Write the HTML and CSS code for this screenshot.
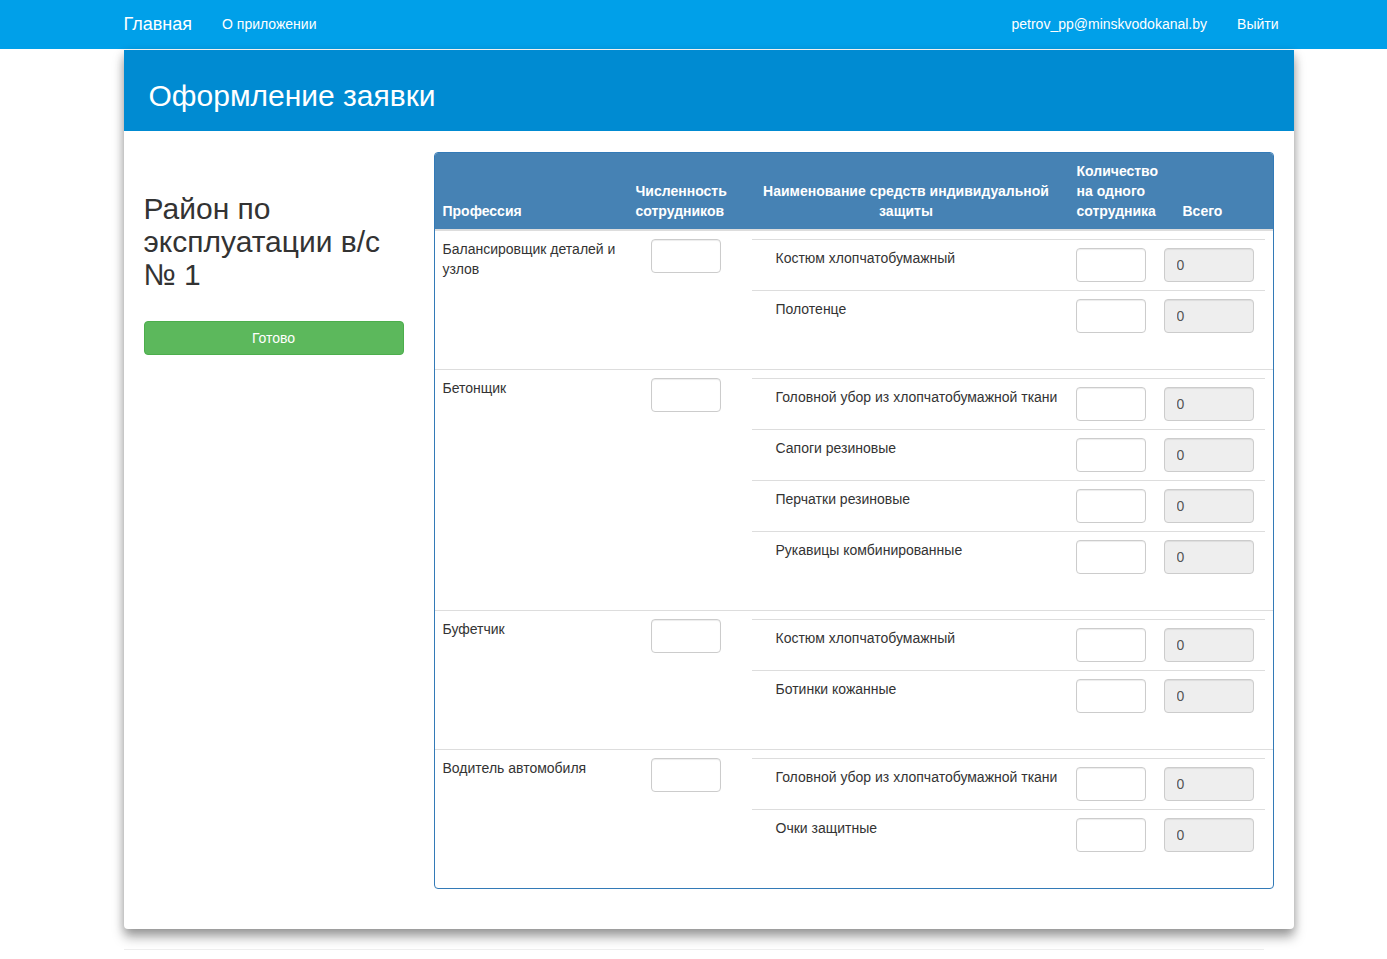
FILE: index.html
```html
<!DOCTYPE html>
<html lang="ru">
<head>
<meta charset="utf-8">
<title>Оформление заявки</title>
<link rel="stylesheet" href="styles.css">
</head>
<body>
<nav class="navbar">
  <div class="nav-inner">
    <a class="brand" href="#">Главная</a>
    <a class="nav-link" href="#">О приложении</a>
    <div class="nav-right">
      <a class="nav-link" href="#">petrov_pp@minskvodokanal.by</a>
      <a class="nav-link" href="#">Выйти</a>
    </div>
  </div>
</nav>

<div class="page">
  <div class="card">
    <div class="card-header">
      <h1 class="card-title">Оформление заявки</h1>
    </div>
    <div class="card-body">
      <div class="side">
        <h2 class="district">Район по эксплуатации в/с № 1</h2>
        <button class="btn-done" type="button">Готово</button>
      </div>
      <div class="panel">
        <table class="main-table">
          <colgroup>
            <col class="c-prof"><col class="c-count"><col class="c-name"><col class="c-qty"><col class="c-total">
          </colgroup>
          <thead>
            <tr>
              <th>Профессия</th>
              <th>Численность сотрудников</th>
              <th class="th-center">Наименование средств индивидуальной защиты</th>
              <th>Количество на одного сотрудника</th>
              <th>Всего</th>
            </tr>
          </thead>
          <tbody>
            <tr>
              <td>Балансировщик деталей и узлов</td>
              <td class="td-count"><input class="field" type="text"></td>
              <td colspan="3">
                <table class="inner-table">
                  <colgroup><col class="i-name"><col class="i-qty"><col class="i-total"></colgroup>
                  <tr><td class="i-label">Костюм хлопчатобумажный</td><td><input class="field" type="text"></td><td><input class="field total" type="text" value="0" readonly></td></tr>
                  <tr><td class="i-label">Полотенце</td><td><input class="field" type="text"></td><td><input class="field total" type="text" value="0" readonly></td></tr>
                </table>
              </td>
            </tr>
            <tr>
              <td>Бетонщик</td>
              <td class="td-count"><input class="field" type="text"></td>
              <td colspan="3">
                <table class="inner-table">
                  <colgroup><col class="i-name"><col class="i-qty"><col class="i-total"></colgroup>
                  <tr><td class="i-label">Головной убор из хлопчатобумажной ткани</td><td><input class="field" type="text"></td><td><input class="field total" type="text" value="0" readonly></td></tr>
                  <tr><td class="i-label">Сапоги резиновые</td><td><input class="field" type="text"></td><td><input class="field total" type="text" value="0" readonly></td></tr>
                  <tr><td class="i-label">Перчатки резиновые</td><td><input class="field" type="text"></td><td><input class="field total" type="text" value="0" readonly></td></tr>
                  <tr><td class="i-label">Рукавицы комбинированные</td><td><input class="field" type="text"></td><td><input class="field total" type="text" value="0" readonly></td></tr>
                </table>
              </td>
            </tr>
            <tr>
              <td>Буфетчик</td>
              <td class="td-count"><input class="field" type="text"></td>
              <td colspan="3">
                <table class="inner-table">
                  <colgroup><col class="i-name"><col class="i-qty"><col class="i-total"></colgroup>
                  <tr><td class="i-label">Костюм хлопчатобумажный</td><td><input class="field" type="text"></td><td><input class="field total" type="text" value="0" readonly></td></tr>
                  <tr><td class="i-label">Ботинки кожанные</td><td><input class="field" type="text"></td><td><input class="field total" type="text" value="0" readonly></td></tr>
                </table>
              </td>
            </tr>
            <tr>
              <td>Водитель автомобиля</td>
              <td class="td-count"><input class="field" type="text"></td>
              <td colspan="3">
                <table class="inner-table">
                  <colgroup><col class="i-name"><col class="i-qty"><col class="i-total"></colgroup>
                  <tr><td class="i-label">Головной убор из хлопчатобумажной ткани</td><td><input class="field" type="text"></td><td><input class="field total" type="text" value="0" readonly></td></tr>
                  <tr><td class="i-label">Очки защитные</td><td><input class="field" type="text"></td><td><input class="field total" type="text" value="0" readonly></td></tr>
                </table>
              </td>
            </tr>
          </tbody>
        </table>
      </div>
    </div>
  </div>
  <hr class="footer-line">
</div>
</body>
</html>
```

FILE: styles.css
```css
* { box-sizing: border-box; }

html, body {
  margin: 0;
  padding: 0;
  background: #fff;
}

body {
  font-family: "Liberation Sans", Arial, Helvetica, sans-serif;
  font-size: 14px;
  line-height: 20px;
  color: #333;
}

a { text-decoration: none; }

.navbar {
  background: #00a0e9;
  height: 50px;
  border-bottom: 1px solid #fff;
}

.nav-inner {
  width: 1200px;
  margin: 0 auto;
  padding-left: 30px;
  height: 47px;
  display: flex;
  align-items: center;
}

.brand {
  color: #fff;
  font-size: 18px;
  line-height: 20px;
  margin-right: 30px;
}

.nav-link {
  color: #fff;
  font-size: 14px;
  line-height: 20px;
}

.nav-right {
  margin-left: auto;
  display: flex;
  gap: 30px;
  padding-right: 15px;
}

.page {
  width: 1200px;
  margin: 0 auto;
  padding-left: 30px;
}

.card {
  width: 1170px;
  background: #fff;
  border-radius: 0 0 4px 4px;
  box-shadow: 0 8px 12px rgba(0, 0, 0, 0.35), 0 2px 10px rgba(0, 0, 0, 0.15);
}

.card-header {
  background: #008bd2;
  height: 81px;
  padding: 0 25px;
  display: flex;
  align-items: center;
}

.card-title {
  margin: 0;
  font-size: 30px;
  font-weight: normal;
  line-height: 33px;
  color: #fff;
  padding-top: 10px;
}

.card-body {
  display: flex;
  gap: 30px;
  padding: 21px 20px 40px 20px;
}

.side {
  width: 260px;
  flex: none;
}

.district {
  margin: 40px 0 30px 0;
  font-size: 30px;
  font-weight: normal;
  line-height: 33px;
  color: #333;
}

.btn-done {
  display: block;
  width: 260px;
  height: 34px;
  background: #5cb85c;
  border: 1px solid #4cae4c;
  border-radius: 4px;
  color: #fff;
  font-family: inherit;
  font-size: 14px;
  cursor: pointer;
}

.panel {
  flex: 1;
  border: 1px solid #337ab7;
  border-radius: 4px;
  overflow: hidden;
}

.main-table {
  width: 100%;
  border-collapse: collapse;
  table-layout: fixed;
}

.c-prof { width: 193px; }
.c-count { width: 116px; }
.c-name { width: 325px; }
.c-qty { width: 106px; }
.c-total { width: 98px; }

.main-table > thead > tr > th {
  background: #4682b4;
  color: #fff;
  font-weight: bold;
  text-align: left;
  vertical-align: bottom;
  padding: 8px;
  line-height: 20px;
  border-bottom: 2px solid #ddd;
}

.main-table > thead > tr > th.th-center {
  text-align: center;
}

.main-table > tbody > tr > td {
  padding: 8px;
  vertical-align: top;
  border-top: 1px solid #ddd;
  line-height: 20px;
}

.main-table > tbody > tr:first-child > td {
  border-top: none;
}

.td-count {
  text-align: center;
}

.field {
  width: 70px;
  height: 34px;
  padding: 6px 12px;
  border: 1px solid #ccc;
  border-radius: 4px;
  box-shadow: inset 0 1px 1px rgba(0, 0, 0, 0.075);
  font-family: inherit;
  font-size: 14px;
  color: #555;
  background: #fff;
  display: inline-block;
  vertical-align: top;
}

.field.total {
  width: 90px;
  background: #eee;
}

.inner-table {
  width: 100%;
  border-collapse: collapse;
  table-layout: fixed;
  margin-bottom: 20px;
}

.i-name { width: 316px; }
.i-qty { width: 88px; }
.i-total { width: 109px; }

.inner-table td {
  padding: 8px;
  border-top: 1px solid #ddd;
  vertical-align: top;
  line-height: 20px;
}

.inner-table td.i-label {
  padding-left: 24px;
}

.footer-line {
  width: 1140px;
  margin: 20px 0 0 0;
  border: 0;
  border-top: 1px solid #eee;
}
```
